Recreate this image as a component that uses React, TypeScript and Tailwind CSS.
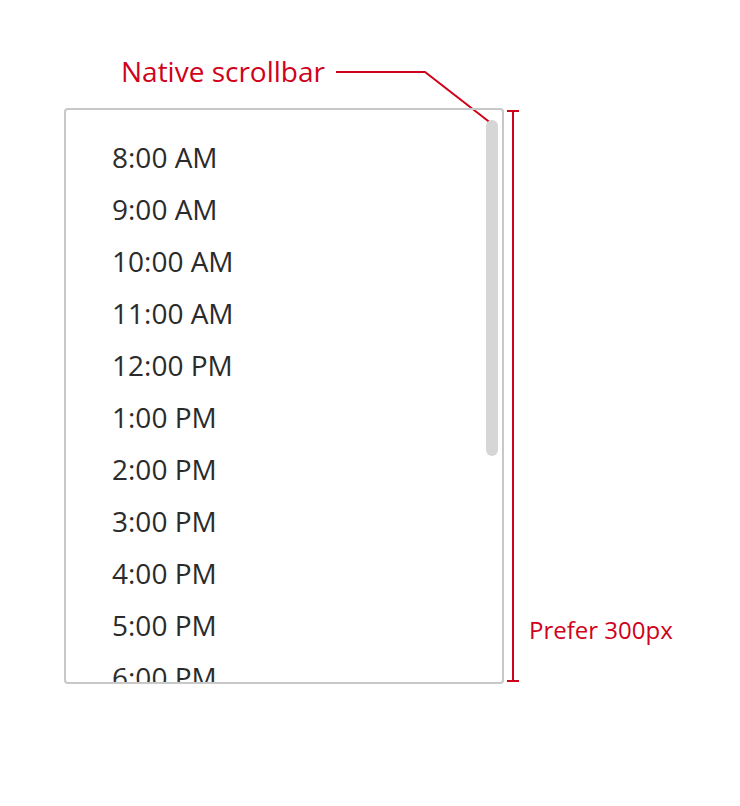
import React from 'react';

const times = [
  '8:00 AM',
  '9:00 AM',
  '10:00 AM',
  '11:00 AM',
  '12:00 PM',
  '1:00 PM',
  '2:00 PM',
  '3:00 PM',
  '4:00 PM',
  '5:00 PM',
  '6:00 PM',
];

const App = () => {
  return (
    <div
      className="relative w-[740px] h-[806px] bg-white overflow-hidden"
      style={{ fontFamily: '"Open Sans", "Noto Sans", sans-serif' }}
    >
      {/* Callout label */}
      <div className="absolute left-[121px] top-[51px] text-[28px] leading-[40px] text-[#d0021b]">
        Native scrollbar
      </div>

      {/* Leader line + height bracket */}
      <svg className="absolute left-0 top-0" width="740" height="806">
        <polyline points="336,72 425,72 492,124" fill="none" stroke="#d0021b" strokeWidth="2" />
        <line x1="513" y1="110" x2="513" y2="682" stroke="#d0021b" strokeWidth="2" />
        <line x1="507" y1="111" x2="519" y2="111" stroke="#d0021b" strokeWidth="2" />
        <line x1="507" y1="681" x2="519" y2="681" stroke="#d0021b" strokeWidth="2" />
      </svg>

      <div className="absolute left-[529px] top-[614px] text-[24px] leading-[32px] text-[#d0021b]">
        Prefer 300px
      </div>

      {/* Time list */}
      <div className="ml-[64px] mt-[108px] relative w-[440px] h-[576px] border-2 border-[#c8c8c8] rounded-[4px] overflow-hidden">
        <ul className="pt-[21px] pl-[46px]">
          {times.map((t) => (
            <li key={t} className="h-[52px] text-[28px] leading-[52px] text-[#2b2b2b]">
              {t}
            </li>
          ))}
        </ul>
        <div className="absolute right-[4px] top-[10px] w-[12px] h-[336px] rounded-full bg-[#d6d6d6]" />
      </div>
    </div>
  );
};

export default App;
